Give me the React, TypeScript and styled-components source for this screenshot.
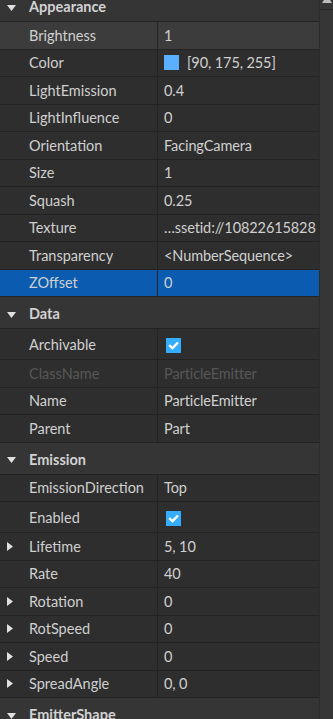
import { FC } from 'react'
import styled, { createGlobalStyle } from 'styled-components'

const GlobalStyle = createGlobalStyle`
  html, body {
    margin: 0;
    padding: 0;
    background: #2e2e2e;
  }
  body {
    font-family: Lato, 'Liberation Sans', sans-serif;
    font-size: 14.5px;
    color: #d0d0d0;
  }
`

const Window = styled.div`
  display: flex;
  width: 333px;
  height: 719px;
  overflow: hidden;
  background: #2e2e2e;
`

const Panel = styled.div`
  width: 319px;
  height: 719px;
  overflow: hidden;
`

const List = styled.div`
  margin-top: -10px;
`

const ScrollTrack = styled.div`
  width: 14px;
  height: 719px;
  background: #363636;
  border-left: 1px solid #2b2b2b;
  box-sizing: border-box;
`

const ScrollButton = styled.div`
  height: 9px;
  border-bottom: 1px solid #2a2a2a;
  display: flex;
  justify-content: center;
  align-items: flex-start;
`

const SectionHeader = styled.div`
  display: flex;
  align-items: center;
  height: 32px;
  padding-top: 4px;
  box-sizing: border-box;
  background: #353535;
  border-bottom: 1px solid #232323;
  font-weight: 700;
  line-height: 1;
  color: #d2d2d2;
`

const Arrow = styled.span`
  width: 29px;
  flex: none;
  display: flex;
  justify-content: flex-start;
  padding-left: 7px;
  box-sizing: border-box;
`

const Row = styled.div<{ $tall?: boolean; $hover?: boolean; $selected?: boolean }>`
  display: flex;
  height: ${p => (p.$tall ? '31px' : '27.5px')};
  box-sizing: border-box;
  border-bottom: 1px solid #232323;
  background: ${p => (p.$selected ? '#0b5cb1' : p.$hover ? '#3c3c3c' : '#2e2e2e')};
`

const NameCell = styled.div<{ $disabled?: boolean }>`
  display: flex;
  align-items: center;
  width: 157px;
  flex: none;
  border-right: 1px solid #232323;
  color: ${p => (p.$disabled ? '#575757' : '#d0d0d0')};
  white-space: nowrap;
`

const ValueCell = styled.div<{ $disabled?: boolean }>`
  display: flex;
  align-items: center;
  gap: 8px;
  flex: 1;
  min-width: 0;
  padding-left: 6px;
  color: ${p => (p.$disabled ? '#575757' : '#d0d0d0')};
  white-space: nowrap;
  overflow: hidden;
  letter-spacing: -0.1px;
`

const Swatch = styled.span<{ $color: string }>`
  width: 15px;
  height: 15px;
  flex: none;
  background: ${p => p.$color};
`

const CheckBox = styled.span`
  width: 15px;
  height: 15px;
  margin-left: 2px;
  margin-top: 3px;
  flex: none;
  background: #34aefc;
  display: flex;
  align-items: center;
  justify-content: center;
`

type RowData = {
  name: string
  value?: string
  color?: string
  check?: boolean
  expand?: boolean
  hover?: boolean
  selected?: boolean
  disabled?: boolean
}

type Section = { title: string; rows: RowData[] }

const sections: Section[] = [
  {
    title: 'Appearance',
    rows: [
      { name: 'Brightness', value: '1', hover: true },
      { name: 'Color', value: '[90, 175, 255]', color: '#5aafff' },
      { name: 'LightEmission', value: '0.4' },
      { name: 'LightInfluence', value: '0' },
      { name: 'Orientation', value: 'FacingCamera' },
      { name: 'Size', value: '1' },
      { name: 'Squash', value: '0.25' },
      { name: 'Texture', value: '…ssetid://10822615828' },
      { name: 'Transparency', value: '<NumberSequence>' },
      { name: 'ZOffset', value: '0', selected: true },
    ],
  },
  {
    title: 'Data',
    rows: [
      { name: 'Archivable', check: true },
      { name: 'ClassName', value: 'ParticleEmitter', disabled: true },
      { name: 'Name', value: 'ParticleEmitter' },
      { name: 'Parent', value: 'Part' },
    ],
  },
  {
    title: 'Emission',
    rows: [
      { name: 'EmissionDirection', value: 'Top' },
      { name: 'Enabled', check: true },
      { name: 'Lifetime', value: '5, 10', expand: true },
      { name: 'Rate', value: '40' },
      { name: 'Rotation', value: '0', expand: true },
      { name: 'RotSpeed', value: '0', expand: true },
      { name: 'Speed', value: '0', expand: true },
      { name: 'SpreadAngle', value: '0, 0', expand: true },
    ],
  },
  { title: 'EmitterShape', rows: [] },
]

const DownTriangle: FC = () => (
  <svg width="9" height="6" viewBox="0 0 9 6">
    <polygon points="0,0 9,0 4.5,6" fill="#e0e0e0" />
  </svg>
)

const RightTriangle: FC = () => (
  <svg width="6" height="9" viewBox="0 0 6 9">
    <polygon points="0,0 6,4.5 0,9" fill="#e0e0e0" />
  </svg>
)

const CheckMark: FC = () => (
  <svg width="11" height="9" viewBox="0 0 11 9">
    <path d="M1.2 4.2 L4.5 7.2 L10 1.5" stroke="#ffffff" strokeWidth="2.4" fill="none" />
  </svg>
)

const PropertyRow: FC<{ row: RowData }> = ({ row }) => (
  <Row $tall={row.check} $hover={row.hover} $selected={row.selected}>
    <NameCell $disabled={row.disabled}>
      <Arrow>{row.expand && <RightTriangle />}</Arrow>
      {row.name}
    </NameCell>
    <ValueCell $disabled={row.disabled}>
      {row.color && <Swatch $color={row.color} />}
      {row.check ? (
        <CheckBox>
          <CheckMark />
        </CheckBox>
      ) : (
        row.value
      )}
    </ValueCell>
  </Row>
)

const App: FC = () => {
  return (
    <>
      <GlobalStyle />
      <Window>
        <Panel>
          <List>
            {sections.map(section => (
              <div key={section.title}>
                <SectionHeader>
                  <Arrow>
                    <DownTriangle />
                  </Arrow>
                  {section.title}
                </SectionHeader>
                {section.rows.map(row => (
                  <PropertyRow key={row.name} row={row} />
                ))}
              </div>
            ))}
          </List>
        </Panel>
        <ScrollTrack>
          <ScrollButton>
            <svg width="10" height="4" viewBox="0 0 10 4">
              <polygon points="2,0 8,0 10,3 0,3" fill="#bdbdbd" />
            </svg>
          </ScrollButton>
        </ScrollTrack>
      </Window>
    </>
  )
}

export default App
